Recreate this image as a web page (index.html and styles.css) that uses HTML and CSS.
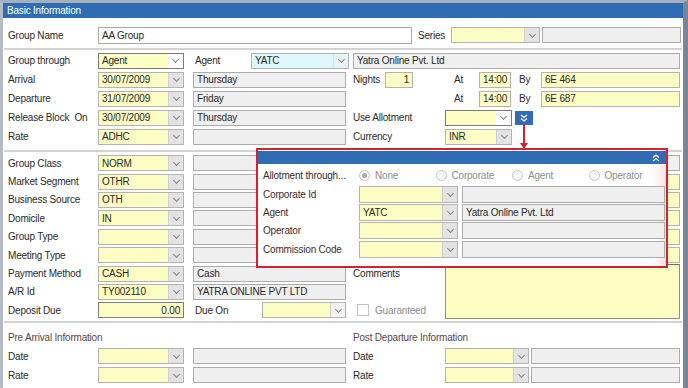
FILE: index.html
```html
<!DOCTYPE html>
<html lang="en">
<head>
    <meta charset="UTF-8">
    <meta name="viewport" content="width=device-width, initial-scale=1.0">
    <title>Basic Information</title>
    <link rel="stylesheet" href="styles.css">
</head>
<body>
  <div class="window">
    <div class="caption">Basic Information</div>

    <div class="name-row">
      <span class="lbl">Group Name</span>
      <div class="fld wht group-name">AA Group</div>
      <span class="lbl series-lbl">Series</span>
      <div class="combo series"><span class="val"></span><span class="drop"></span></div>
      <div class="fld gry grow"></div>
    </div>

    <div class="sep"></div>

    <div class="grid block-a">
      <span class="lbl">Group through</span>
      <div class="combo edit f1"><span class="val">Agent</span><span class="drop"></span></div>
      <div class="pair">
        <span class="lbl agent-lbl">Agent</span>
        <div class="combo cyan agent-combo"><span class="val">YATC</span><span class="drop"></span></div>
      </div>
      <div class="fld gry span2">Yatra Online Pvt. Ltd</div>

      <span class="lbl">Arrival</span>
      <div class="combo f1"><span class="val">30/07/2009</span><span class="drop"></span></div>
      <div class="fld gry f2">Thursday</div>
      <div class="pair">
        <span class="lbl nights-lbl">Nights</span>
        <div class="fld yel nights">1</div>
      </div>
      <div class="flight">
        <span class="lbl at">At</span>
        <div class="fld yel time">14:00</div>
        <span class="lbl by">By</span>
        <div class="fld yel grow">6E 464</div>
      </div>

      <span class="lbl">Departure</span>
      <div class="combo f1"><span class="val">31/07/2009</span><span class="drop"></span></div>
      <div class="fld gry f2">Friday</div>
      <span></span>
      <div class="flight">
        <span class="lbl at">At</span>
        <div class="fld yel time">14:00</div>
        <span class="lbl by">By</span>
        <div class="fld yel grow">6E 687</div>
      </div>

      <span class="lbl">Release Block&nbsp; On</span>
      <div class="combo f1"><span class="val">30/07/2009</span><span class="drop"></span></div>
      <div class="fld gry f2">Thursday</div>
      <span class="lbl">Use Allotment</span>
      <div class="pair">
        <div class="combo edit short"><span class="val"></span><span class="drop"></span></div>
        <div class="expand-btn">
          <svg width="8" height="8" viewBox="0 0 8 8"><path d="M1 1 L4 3.5 L7 1 M1 4.5 L4 7 L7 4.5" fill="none" stroke="#fff" stroke-width="1.2"/></svg>
        </div>
      </div>

      <span class="lbl">Rate</span>
      <div class="combo f1"><span class="val">ADHC</span><span class="drop"></span></div>
      <div class="fld gry f2"></div>
      <span class="lbl">Currency</span>
      <div class="combo short"><span class="val">INR</span><span class="drop"></span></div>
    </div>

    <div class="sep"></div>

    <div class="grid block-b">
      <span class="lbl">Group Class</span>
      <div class="combo f1"><span class="val">NORM</span><span class="drop"></span></div>
      <div class="fld gry f2"></div>
      <span></span>
      <div class="fld gry grow"></div>

      <span class="lbl">Market Segment</span>
      <div class="combo f1"><span class="val">OTHR</span><span class="drop"></span></div>
      <div class="fld gry f2"></div>
      <span></span>
      <div class="fld yel grow"></div>

      <span class="lbl">Business Source</span>
      <div class="combo f1"><span class="val">OTH</span><span class="drop"></span></div>
      <div class="fld gry f2"></div>
      <span></span>
      <div class="fld yel grow"></div>

      <span class="lbl">Domicile</span>
      <div class="combo f1"><span class="val">IN</span><span class="drop"></span></div>
      <div class="fld gry f2"></div>
      <span></span>
      <div class="fld yel grow"></div>

      <span class="lbl">Group Type</span>
      <div class="combo f1"><span class="val"></span><span class="drop"></span></div>
      <div class="fld gry f2"></div>
      <span></span>
      <div class="fld yel grow"></div>

      <span class="lbl">Meeting Type</span>
      <div class="combo f1"><span class="val"></span><span class="drop"></span></div>
      <div class="fld gry f2"></div>
      <span></span>
      <div class="fld yel grow"></div>

      <span class="lbl">Payment Method</span>
      <div class="combo f1"><span class="val">CASH</span><span class="drop"></span></div>
      <div class="fld gry f2">Cash</div>
      <span class="lbl">Comments</span>
      <div class="comments"></div>

      <span class="lbl">A/R Id</span>
      <div class="combo f1"><span class="val">TY002110</span><span class="drop"></span></div>
      <div class="fld gry f2">YATRA ONLINE PVT LTD</div>
      <span></span>

      <span class="lbl">Deposit Due</span>
      <div class="fld yel dark f1 num">0.00</div>
      <div class="pair">
        <span class="lbl due-lbl">Due On</span>
        <div class="combo light due"><span class="val"></span><span class="drop"></span></div>
      </div>
      <label class="check"><span class="box"></span>Guaranteed</label>
    </div>

    <div class="sep"></div>

    <div class="grid block-c">
      <span class="section-title left-title">Pre Arrival Information</span>
      <span class="section-title right-title">Post Departure Information</span>

      <span class="lbl">Date</span>
      <div class="combo f1"><span class="val"></span><span class="drop"></span></div>
      <div class="fld gry f2"></div>
      <span class="lbl">Date</span>
      <div class="pair">
        <div class="combo post"><span class="val"></span><span class="drop"></span></div>
        <div class="fld gry grow"></div>
      </div>

      <span class="lbl">Rate</span>
      <div class="combo f1"><span class="val"></span><span class="drop"></span></div>
      <div class="fld gry f2"></div>
      <span class="lbl">Rate</span>
      <div class="pair">
        <div class="combo post"><span class="val"></span><span class="drop"></span></div>
        <div class="fld gry grow"></div>
      </div>
    </div>

    <!-- pointer from the expand button to the allotment panel -->
    <div class="arrow"></div>

    <div class="popup">
      <div class="popup-head">
        <svg width="8" height="8" viewBox="0 0 8 8"><path d="M1 3.5 L4 1 L7 3.5 M1 7 L4 4.5 L7 7" fill="none" stroke="#fff" stroke-width="1.2"/></svg>
      </div>
      <div class="popup-body">
        <span class="plbl">Allotment through...</span>
        <div class="radios">
          <span class="radio checked"><i></i>None</span>
          <span class="radio"><i></i>Corporate</span>
          <span class="radio"><i></i>Agent</span>
          <span class="radio"><i></i>Operator</span>
        </div>

        <span class="plbl">Corporate Id</span>
        <div class="combo pcombo"><span class="val"></span><span class="drop"></span></div>
        <div class="fld gry"></div>

        <span class="plbl">Agent</span>
        <div class="combo pcombo"><span class="val">YATC</span><span class="drop"></span></div>
        <div class="fld gry">Yatra Online Pvt. Ltd</div>

        <span class="plbl">Operator</span>
        <div class="combo pcombo"><span class="val"></span><span class="drop"></span></div>
        <div class="fld gry"></div>

        <span class="plbl">Commission Code</span>
        <div class="combo pcombo"><span class="val"></span><span class="drop"></span></div>
        <div class="fld gry"></div>
      </div>
    </div>
  </div>
</body>
</html>
```

FILE: styles.css
```css
* {
  box-sizing: border-box;
}

body {
  margin: 0;
  background: #fff;
  font-family: "Liberation Sans", Arial, sans-serif;
  font-size: 10px;
  letter-spacing: -0.2px;
  color: #2a2a2a;
}

.window {
  position: relative;
  width: 688px;
  height: 388px;
  overflow: hidden;
  border-top: 3px solid #a7afbb;
  border-left: 3px solid #b4bbc6;
  border-right: 5px solid #7b8596;
}

.caption {
  height: 15px;
  line-height: 15px;
  padding-left: 4px;
  background: #2e6db4;
  color: #fff;
}

.lbl {
  white-space: nowrap;
}

/* fields */
.fld {
  height: 16px;
  display: flex;
  align-items: center;
  padding: 0 3px;
  border: 1px solid #b3b3b3;
  white-space: nowrap;
  overflow: hidden;
}

.yel { background: #fdfdc3; }
.gry { background: #efefef; border-color: #acacac; }
.wht { background: #fff; border-color: #a9a9a9; }
.dark { border-color: #7c7c7c; }
.num { justify-content: flex-end; }
.grow { flex: 1; }

.combo {
  height: 16px;
  display: flex;
  border: 1px solid #b3b3b3;
  background: #fdfdc3;
}

.combo .val {
  flex: 1;
  display: flex;
  align-items: center;
  padding: 0 3px;
  white-space: nowrap;
}

.combo .drop {
  width: 15px;
  display: flex;
  align-items: center;
  justify-content: center;
  background: #e3e3e3;
  border-left: 1px solid #d0d0d0;
}

.combo .drop::after {
  content: "";
  width: 4px;
  height: 4px;
  border-right: 1px solid #858585;
  border-bottom: 1px solid #858585;
  transform: translateY(-1px) rotate(45deg);
}

.combo.edit {
  border-color: #7a7a7a;
}

.combo.edit .drop {
  background: #fff;
  border-left: none;
}

.combo.light .drop {
  background: #f3f3f3;
}

.combo.cyan {
  background: #ddf7fb;
}

.combo.cyan .drop {
  background: #e4f3f5;
  border-left-color: #cfe3e6;
}

/* separators */
.sep {
  height: 2px;
  margin: 0 1px;
  background: #d3d3d3;
}

/* top row */
.name-row {
  display: flex;
  align-items: center;
  height: 18px;
  margin: 8px 2px 4px 0;
  padding-left: 5px;
}

.name-row .lbl {
  width: 90px;
}

.group-name {
  width: 314px;
  height: 17px;
}

.name-row .series-lbl {
  margin-left: 6px;
  flex: 0 0 33px;
}

.series {
  width: 89px;
  margin-right: 2px;
}

/* grid blocks */
.grid {
  display: grid;
  grid-template-columns: 90px 95px 160px 93px 236px;
  align-items: center;
  padding-left: 5px;
}

.block-a {
  grid-auto-rows: 19px;
  margin: 1px 0 4px;
}

.block-b {
  grid-auto-rows: 18.4px;
  margin: 2px 0 1px;
}

.block-c {
  grid-auto-rows: 19px;
  margin-top: 5px;
}

.f1 { width: 86px; }
.f2 { width: 153px; }
.span2 { grid-column: span 2; margin-right: 2px; }

.pair {
  display: flex;
  align-items: center;
}

.agent-lbl { width: 56px; margin-left: 2px; }
.agent-combo { width: 98px; }

.nights-lbl { width: 32px; }
.nights {
  width: 28px;
  justify-content: flex-end;
}

.flight {
  display: flex;
  align-items: center;
  padding-left: 8px;
  margin-right: 2px;
}

.at { width: 25px; }
.time { width: 32px; }
.by { width: 22px; margin-left: 8px; }

.short { width: 67px; margin-left: -1px; }

.expand-btn {
  width: 18px;
  height: 14px;
  margin-left: 3px;
  background: #2f6db5;
  display: flex;
  align-items: center;
  justify-content: center;
}

.block-b .grow {
  margin-right: 2px;
}

.comments {
  grid-row: span 3;
  align-self: stretch;
  margin: 0 2px 1px -1px;
  background: #fdfdc3;
  border: 1px solid #8f8f8f;
  border-top-color: #6f6f6f;
}

.due-lbl { width: 67px; margin-left: 2px; }
.due { width: 84px; }

.check {
  display: flex;
  align-items: center;
  color: #8c8c8c;
  padding-left: 4px;
}

.check .box {
  width: 12px;
  height: 12px;
  margin-right: 6px;
  border: 1px solid #c3c3c3;
  background: #fff;
}

.section-title {
  color: #5e4646;
  white-space: nowrap;
}

.left-title { grid-column: 1 / 4; }
.right-title { grid-column: 4 / 6; }

.post { width: 84px; margin-left: -1px; margin-right: 2px; }
.block-c .pair .grow { margin-right: 2px; }

/* allotment panel */
.arrow {
  position: absolute;
  left: 520px;
  top: 121px;
  width: 2px;
  height: 19px;
  background: #d9202b;
}

.arrow::after {
  content: "";
  position: absolute;
  left: -3px;
  bottom: -6px;
  border-left: 4px solid transparent;
  border-right: 4px solid transparent;
  border-top: 6px solid #d9202b;
}

.popup {
  position: absolute;
  left: 253px;
  top: 145px;
  width: 412px;
  height: 120px;
  background: #fff;
  border: 2px solid #d4232e;
  box-shadow: inset -14px 0 14px -10px rgba(240, 160, 180, 0.45);
}

.popup-head {
  height: 13px;
  margin-top: 1px;
  background: #2e6db4;
  display: flex;
  align-items: center;
  justify-content: flex-end;
  padding-right: 6px;
}

.popup-body {
  display: grid;
  grid-template-columns: 92px 99px 203px;
  grid-template-rows: 20px repeat(4, 18.3px);
  column-gap: 4px;
  align-items: center;
  padding-left: 5px;
  padding-top: 1px;
}

.plbl {
  color: #3a2c2c;
  white-space: nowrap;
}

.popup-body .fld,
.pcombo {
  height: 17px;
}

.radios {
  grid-column: 2 / 4;
  display: flex;
  color: #8d8d8d;
}

.radio {
  width: 78px;
  display: flex;
  align-items: center;
  gap: 5px;
}

.radio i {
  width: 11px;
  height: 11px;
  border-radius: 50%;
  border: 1px solid #c6c6c6;
  background: #f6f6f6;
  display: flex;
  align-items: center;
  justify-content: center;
}

.radio.checked i::after {
  content: "";
  width: 5px;
  height: 5px;
  border-radius: 50%;
  background: #a9a9a9;
}
```
